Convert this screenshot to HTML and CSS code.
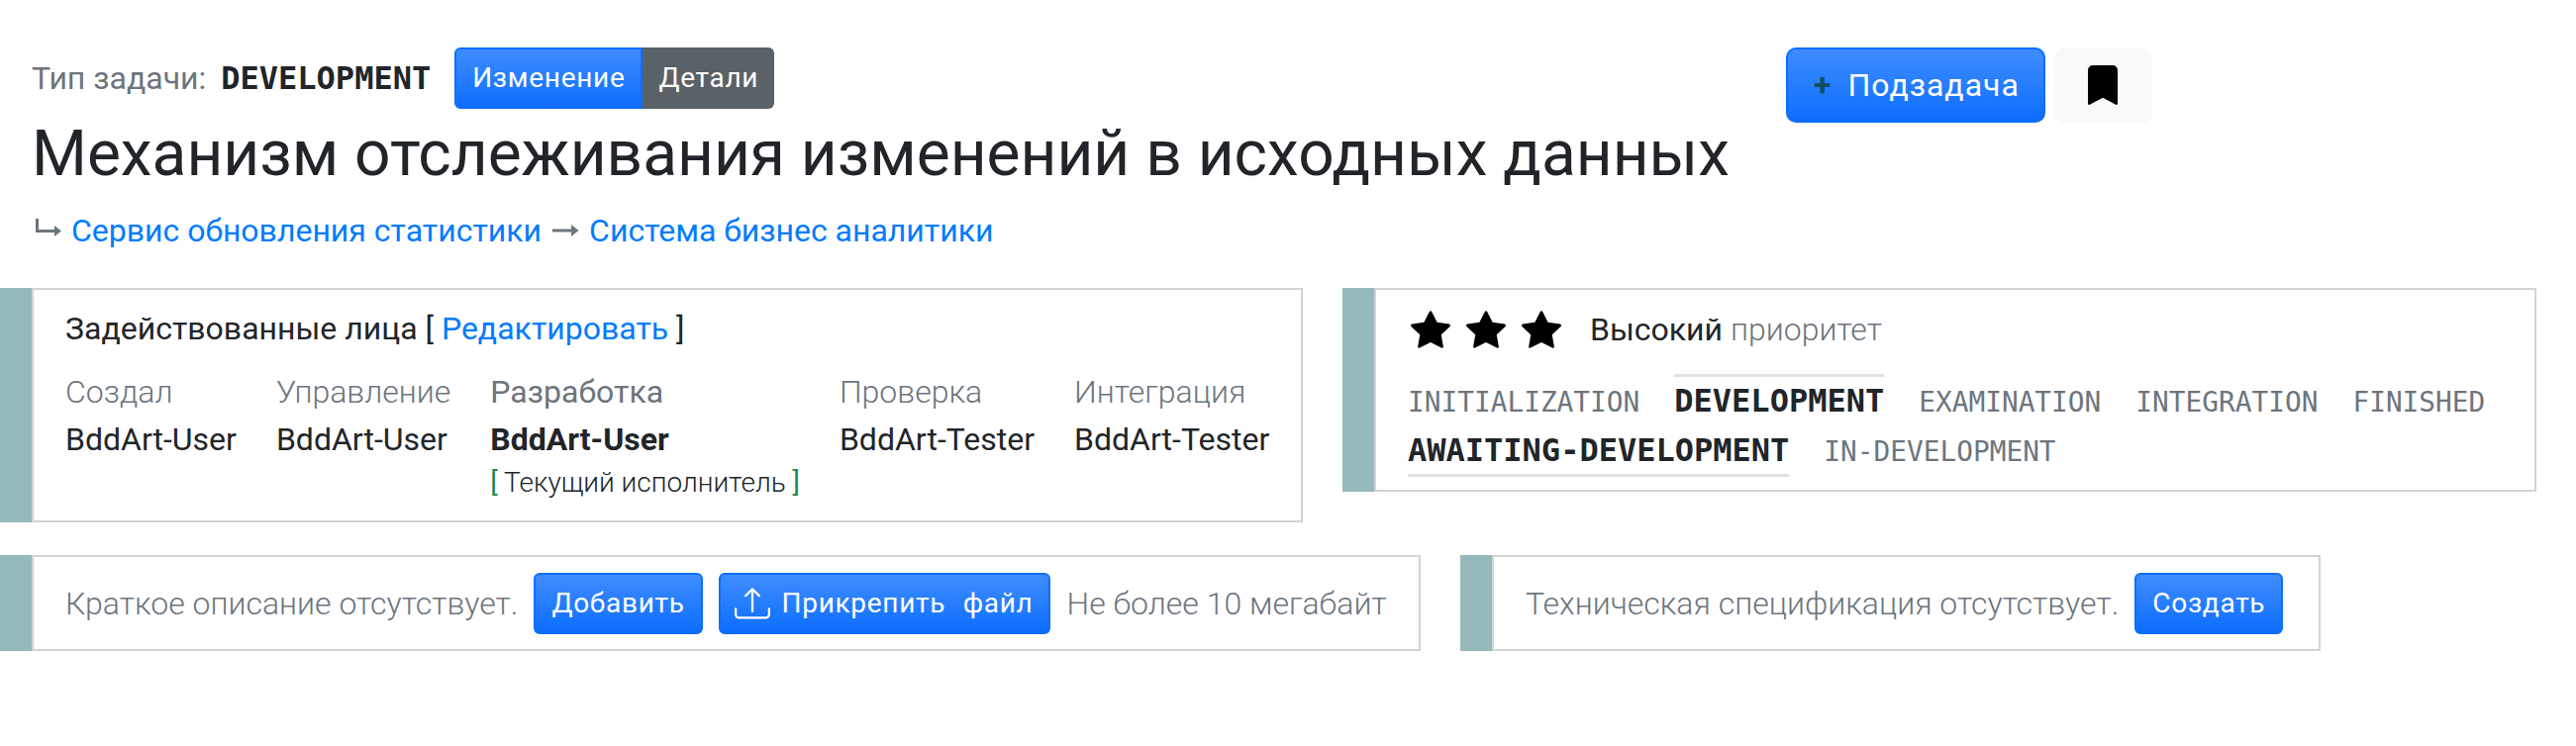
FILE: index.html
```html
<!DOCTYPE html>
<html lang="en">

<head>
    <meta charset="UTF-8">
    <title>Механизм отслеживания изменений</title>
    <link rel="stylesheet" href="styles.css">
</head>

<body>

    <div class="header">
        <div class="header-left">
            <div class="type-row">
                <span class="type-label">Тип задачи:</span>
                <span class="type-value">DEVELOPMENT</span>
                <div class="btn-group">
                    <a class="btn btn-blue">Изменение</a>
                    <a class="btn btn-gray">Детали</a>
                </div>
            </div>
            <h1 class="title">Механизм отслеживания изменений в исходных данных</h1>
            <div class="crumbs">
                <svg class="crumb-icon" viewBox="0 0 32 24" fill="none" stroke="#6c757d" stroke-width="3">
                    <path d="M5.5 0v12.5H24" />
                    <path d="M23 7l7 5.5-7 5.5z" fill="#6c757d" stroke="none" />
                </svg>
                <a class="link">Сервис обновления статистики</a>
                <svg class="crumb-icon" viewBox="0 0 32 24" fill="none" stroke="#6c757d" stroke-width="3">
                    <path d="M3 12h22" />
                    <path d="M22 6l7.5 6-7.5 6z" fill="#6c757d" stroke="none" />
                </svg>
                <a class="link">Система бизнес аналитики</a>
            </div>
        </div>
        <div class="header-right">
            <a class="btn btn-blue btn-big"><span class="plus">+</span>Подзадача</a>
            <a class="btn-light">
                <svg class="bookmark" viewBox="0 0 16 16" fill="#000">
                    <path d="M2 2v13.5a.5.5 0 0 0 .74.439L8 13.069l5.26 2.87A.5.5 0 0 0 14 15.5V2a2 2 0 0 0-2-2H4a2 2 0 0 0-2 2z" />
                </svg>
            </a>
        </div>
    </div>

    <div class="row row-top">
        <div class="panel panel-people">
            <div class="people-head">Задействованные лица [ <a class="link">Редактировать</a> ]</div>
            <div class="people">
                <div class="person">
                    <div class="role">Создал</div>
                    <div>BddArt-User</div>
                </div>
                <div class="person">
                    <div class="role">Управление</div>
                    <div>BddArt-User</div>
                </div>
                <div class="person current">
                    <div class="role">Разработка</div>
                    <div class="current-name">BddArt-User</div>
                    <div class="current-note"><span class="green">[</span> Текущий исполнитель <span class="green">]</span></div>
                </div>
                <div class="person">
                    <div class="role">Проверка</div>
                    <div>BddArt-Tester</div>
                </div>
                <div class="person">
                    <div class="role">Интеграция</div>
                    <div>BddArt-Tester</div>
                </div>
            </div>
        </div>

        <div class="panel panel-status">
            <div class="priority">
                <svg class="star" viewBox="0 0 16 16"><use href="#star-path" /></svg>
                <svg class="star" viewBox="0 0 16 16"><use href="#star-path" /></svg>
                <svg class="star" viewBox="0 0 16 16"><use href="#star-path" /></svg>
                <span class="priority-text">Высокий <span class="muted">приоритет</span></span>
            </div>
            <div class="stages stages-first">
                <span class="stage">INITIALIZATION</span>
                <span class="stage stage-top">DEVELOPMENT</span>
                <span class="stage">EXAMINATION</span>
                <span class="stage">INTEGRATION</span>
                <span class="stage">FINISHED</span>
            </div>
            <div class="stages">
                <span class="stage stage-bottom">AWAITING-DEVELOPMENT</span>
                <span class="stage">IN-DEVELOPMENT</span>
            </div>
        </div>
    </div>

    <div class="row">
        <div class="panel panel-brief">
            <span class="muted">Краткое описание отсутствует.</span>
            <a class="btn btn-blue">Добавить</a>
            <a class="btn btn-blue btn-upload">
                <svg class="upload" viewBox="0 0 16 16" fill="#fff">
                    <path d="M.5 9.9a.5.5 0 0 1 .5.5v2.5a1 1 0 0 0 1 1h12a1 1 0 0 0 1-1v-2.5a.5.5 0 0 1 1 0v2.5a2 2 0 0 1-2 2H2a2 2 0 0 1-2-2v-2.5a.5.5 0 0 1 .5-.5z" />
                    <path d="M7.646 1.146a.5.5 0 0 1 .708 0l3 3a.5.5 0 0 1-.708.708L8.5 2.707V11.5a.5.5 0 0 1-1 0V2.707L5.354 4.854a.5.5 0 1 1-.708-.708l3-3z" />
                </svg>
                Прикрепить файл
            </a>
            <span class="muted">Не более 10 мегабайт</span>
        </div>
        <div class="panel panel-spec">
            <span class="muted">Техническая спецификация отсутствует.</span>
            <a class="btn btn-blue">Создать</a>
        </div>
    </div>

    <svg class="defs" width="0" height="0">
        <defs>
            <path id="star-path" d="M3.612 15.443c-.386.198-.824-.149-.746-.592l.83-4.73L.173 6.765c-.329-.314-.158-.888.283-.95l4.898-.696L7.538.792c.197-.39.73-.39.927 0l2.184 4.327 4.898.696c.441.062.612.636.282.95l-3.522 3.356.83 4.73c.078.443-.36.79-.746.592L8 13.187l-4.389 2.256z" />
        </defs>
    </svg>

</body>

</html>
```

FILE: styles.css
```css
* {
    box-sizing: border-box;
}

body {
    margin: 0;
    padding-top: 48px;
    font-family: Roboto, "Liberation Sans", sans-serif;
    font-size: 32px;
    font-weight: 300;
    line-height: 48px;
    color: #212529;
    background: #fff;
}

.link {
    color: #007bff;
    font-weight: 400;
}

.muted {
    color: #6c757d;
    font-weight: 300;
}

.header {
    display: flex;
    padding-left: 32px;
}

.header-left {
    width: 1772px;
}

.header-right {
    display: flex;
    gap: 9px;
}

.type-row {
    display: flex;
    align-items: center;
    height: 62px;
}

.type-label {
    color: #6c757d;
    font-weight: 400;
}

.type-value {
    margin-left: 15px;
    margin-right: 24px;
    font-family: "DejaVu Sans Mono", monospace;
    font-weight: 700;
}

.btn-group {
    display: flex;
}

.btn {
    display: inline-flex;
    align-items: center;
    height: 62px;
    padding: 0 16px;
    color: #fff;
    font-size: 28px;
    font-weight: 400;
    letter-spacing: 0.7px;
    white-space: nowrap;
    border-radius: 6px;
}

.btn-blue {
    border: 2px solid #0d6efd;
    background: linear-gradient(180deg, #3f8cff, #0d6efd);
}

.btn-gray {
    background: #5a6268;
}

.btn-group .btn-blue {
    border-radius: 6px 0 0 6px;
}

.btn-group .btn-gray {
    border-radius: 0 6px 6px 0;
}

.btn-big {
    height: 76px;
    padding: 0 24px 0 26px;
    font-size: 32px;
    letter-spacing: 1px;
    border-radius: 10px;
}

.plus {
    margin-right: 16px;
    color: #0d4f66;
    font-weight: 700;
}

.btn-light {
    display: flex;
    align-items: center;
    justify-content: center;
    width: 99px;
    height: 76px;
    background: #f8f9fa;
    border-radius: 10px;
}

.bookmark {
    width: 40px;
    height: 40px;
}

.title {
    margin: 8px 0 0;
    font-size: 64px;
    font-weight: 400;
    line-height: 76px;
}

.crumbs {
    display: flex;
    align-items: center;
    gap: 8px;
    margin-top: 15px;
    font-weight: 400;
}

.crumb-icon {
    width: 32px;
    height: 24px;
    overflow: visible;
}

.row {
    display: flex;
    align-items: flex-start;
    gap: 72px;
    padding-left: 32px;
    white-space: nowrap;
}

.row-top {
    margin-top: 34px;
    margin-bottom: 33px;
}

/* teal stripe sits outside the grey border */
.panel {
    border: 2px solid #d3d3d3;
    box-shadow: -32px 0 0 #96b9bb;
    background: #fff;
}

.panel-people {
    width: 1284px;
    height: 237px;
    padding: 15px 32px 0;
    font-weight: 400;
}

.people {
    display: flex;
    gap: 40px;
    margin-top: 16px;
}

.role {
    color: #6c757d;
    font-weight: 300;
}

.current .role {
    font-weight: 400;
}

.current-name {
    font-weight: 700;
}

.current-note {
    font-size: 28px;
    font-weight: 300;
    line-height: 40px;
}

.green {
    color: #198754;
    font-weight: 400;
}

.panel-status {
    width: 1174px;
    height: 206px;
    padding: 16px 32px 0;
}

.priority {
    display: flex;
    align-items: center;
    height: 48px;
    padding-left: 3px;
    font-weight: 400;
}

.star {
    width: 40px;
    height: 40px;
    margin-right: 16px;
}

.priority-text {
    margin-left: 13px;
}

.stages {
    display: flex;
    align-items: baseline;
    gap: 35px;
    font-family: "DejaVu Sans Mono", monospace;
    font-size: 27.8px;
    font-weight: 400;
    color: #6c757d;
}

.stages-first {
    margin-top: 21px;
}

.stage-top,
.stage-bottom {
    font-size: 32px;
    font-weight: 700;
    color: #212529;
}

.stage-top {
    border-top: 3px solid #dee2e6;
}

.stage-bottom {
    border-bottom: 3px solid #dee2e6;
}

.panel-brief,
.panel-spec {
    display: flex;
    align-items: center;
    height: 97px;
    padding: 0 32px;
    gap: 16px;
}

.panel-brief {
    width: 1403px;
}

.panel-spec {
    width: 837px;
}

.upload {
    width: 36px;
    height: 36px;
    margin-right: 12px;
    margin-left: -2px;
}

.btn-upload {
    word-spacing: 10px;
}

.defs {
    position: absolute;
}
```
